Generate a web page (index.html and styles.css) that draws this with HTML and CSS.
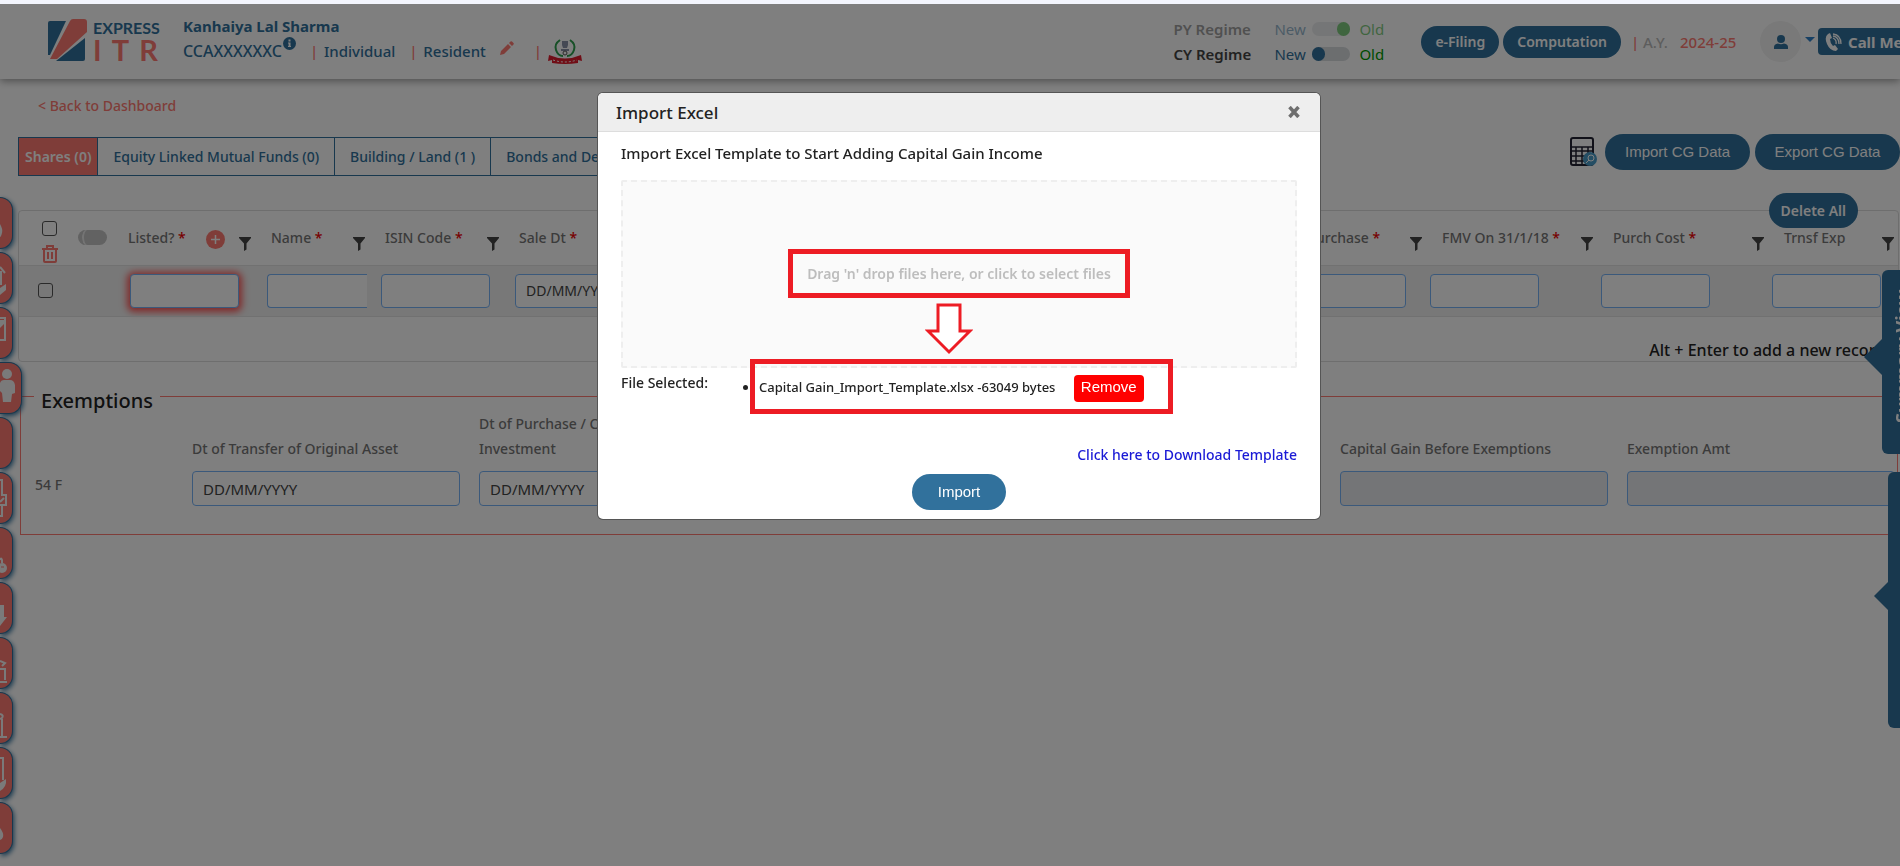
FILE: index.html
```html
<!DOCTYPE html>
<html lang="en">
<head>
    <meta charset="utf-8">
    <title>Express ITR - Capital Gain</title>
    <link rel="stylesheet" href="styles.css">
</head>
<body>
    <svg class="defs" width="0" height="0">
        <symbol id="filter" viewBox="0 0 12 14">
            <path d="M0 0h12v1L7.500 6.500V12.500L5 14V6.500L0 1z" fill="#444"/>
        </symbol>
    </svg>

    <header>
        <div class="logo">
            <svg width="40" height="43" viewBox="0 0 40 43">
                <path d="M2 2h16L2 36H0V4q0-2 2-2z" fill="#31719c"/>
                <path d="M25 0h11q3 0 3 3v10L9 40H2L22 2q1-2 3-2z" fill="#ff7b72"/>
                <path d="M37 19v21q0 2-2 2H8z" fill="#31719c"/>
            </svg>
            <div class="logo-text">
                <span class="express">EXPRESS</span>
                <span class="itr"><b>I</b><b>T</b><b>R</b></span>
            </div>
        </div>
        <div class="client">
            <div class="client-name">Kanhaiya Lal Sharma</div>
            <div class="client-info">
                <span class="pan">CCAXXXXXXC</span>
                <svg class="info" width="13" height="13" viewBox="0 0 13 13"><circle cx="6.500" cy="6.500" r="6.500" fill="#31719c"/><path d="M5.500 2.500h2v2h-2zM5 5.500h2.500V9H8v1H5V9h.6V6.500H5z" fill="#fff"/></svg>
                <i>|</i>
                <span>Individual</span>
                <i>|</i>
                <span>Resident</span>
                <svg class="pencil" width="14" height="14" viewBox="0 0 14 14"><path d="M0 14l1-4 7-7 3 3-7 7zM9 2l1.500-1.500q.7-.7 1.500 0L13.500 2q.7.8 0 1.500L12 5z" fill="#ff7b72"/></svg>
                <i>|</i>
                <svg class="emblem" width="34" height="26" viewBox="0 0 34 26">
                    <path d="M12 2q-6 4-4 10 2 6 7 6M22 2q6 4 4 10-2 6-7 6" fill="none" stroke="#2fa04e" stroke-width="2"/>
                    <path d="M14 3h6v4l-1 3h-4l-1-3zM13 11h8v2h-8z" fill="#8a93a8"/>
                    <circle cx="17" cy="15" r="2" fill="none" stroke="#555"/>
                    <path d="M1 17q16 7 32 0l1 6-4-1v3q-13 2-26 0v-3l-4 1z" fill="#e01b2c"/>
                    <path d="M5 22q12 4 24 0" fill="none" stroke="#fff" stroke-dasharray="2 2"/>
                </svg>
            </div>
        </div>
        <div class="regimes">
            <div class="regime faded">
                <strong>PY Regime</strong>
                <label for="py">New</label>
                <input type="checkbox" id="py" class="switch" checked>
                <label for="py" class="old">Old</label>
            </div>
            <div class="regime">
                <strong>CY Regime</strong>
                <label for="cy">New</label>
                <input type="checkbox" id="cy" class="switch">
                <label for="cy" class="old">Old</label>
            </div>
        </div>
        <div class="actions">
            <button class="pill">e-Filing</button>
            <button class="pill">Computation</button>
            <i>|</i>
            <span class="ay">A.Y.</span>
            <span class="year">2024-25</span>
            <button class="user" aria-label="Account">
                <svg width="14" height="14" viewBox="0 0 14 14"><circle cx="7" cy="4" r="4" fill="#31719c"/><path d="M0 14v-2q0-3 4-3.500 3 1.500 6 0 4 .5 4 3.500v2z" fill="#31719c"/></svg>
            </button>
            <span class="caret"></span>
            <button class="call">
                <svg width="17" height="18" viewBox="0 0 17 18"><path d="M3 1l2-1 2 5-2 1q0 4 3 7l2-1 3 4-2 2Q5 18 2 11-1 4 3 1z" fill="#fff"/><path d="M8 5q4 2 3 6M8 3q6 1 6 8M8 1q8 1 8 10" fill="none" stroke="#fff" stroke-width="1.300"/></svg>
                Call Me
            </button>
        </div>
    </header>

    <main>
        <a href="#" class="back">&lt; Back to Dashboard</a>
        <div class="toolbar">
            <nav class="tabs">
                <a href="#" class="active">Shares (0)</a>
                <a href="#">Equity Linked Mutual Funds (0)</a>
                <a href="#">Building / Land (1 )</a>
                <a href="#">Bonds and Debentures (0)</a>
            </nav>
            <div class="tools">
                <svg width="27" height="29" viewBox="0 0 27 29">
                    <rect x="1" y="1" width="22" height="27" rx="2" fill="none" stroke="#223" stroke-width="2"/>
                    <path d="M1 10h22M1 14h22M1 19h22M1 24h22M6 10v18M12 10v18M18 10v18" stroke="#223" stroke-width="1.500"/>
                    <circle cx="20" cy="22" r="7" fill="#4a9cc9"/>
                    <circle cx="21" cy="21" r="3" fill="none" stroke="#fff"/><path d="M19 23l-3 3" stroke="#fff"/>
                </svg>
                <button class="pill wide">Import CG Data</button>
                <button class="pill wide">Export CG Data</button>
            </div>
        </div>

        <section class="grid-panel">
            <button class="pill delete-all">Delete All</button>
            <table>
                <colgroup>
                    <col class="c-check"><col class="c-listed"><col class="c-name"><col class="c-isin"><col class="c-date">
                    <col><col class="c-date"><col class="c-date"><col class="c-date"><col class="c-last">
                </colgroup>
                <thead>
                    <tr>
                        <th>
                            <div class="select-all">
                                <div class="stack">
                                    <input type="checkbox" class="tick" aria-label="Select all">
                                    <svg width="16" height="18" viewBox="0 0 16 18"><path d="M0 4h16M5 3V1h6v2M2 4v12q0 1 1 1h10q1 0 1-1V4M6 7v7M10 7v7" fill="none" stroke="#ff7b72" stroke-width="2"/></svg>
                                </div>
                                <span class="mini-switch"></span>
                            </div>
                        </th>
                        <th><div class="head"><span>Listed? <em>*</em></span>
                            <svg class="plus" width="19" height="19" viewBox="0 0 19 19"><circle cx="9.500" cy="9.500" r="9.500" fill="#ff7b72"/><path d="M9.500 5v9M5 9.500h9" stroke="#fff" stroke-width="1.500"/></svg>
                            <svg class="filter"><use href="#filter"/></svg></div></th>
                        <th><div class="head"><span>Name <em>*</em></span><svg class="filter"><use href="#filter"/></svg></div></th>
                        <th><div class="head"><span>ISIN Code <em>*</em></span><svg class="filter"><use href="#filter"/></svg></div></th>
                        <th><div class="head"><span>Sale Dt <em>*</em></span><svg class="filter"><use href="#filter"/></svg></div></th>
                        <th></th>
                        <th><div class="head"><span>Dt of Purchase <em>*</em></span><svg class="filter"><use href="#filter"/></svg></div></th>
                        <th><div class="head"><span>FMV On 31/1/18 <em>*</em></span><svg class="filter"><use href="#filter"/></svg></div></th>
                        <th><div class="head"><span>Purch Cost <em>*</em></span><svg class="filter"><use href="#filter"/></svg></div></th>
                        <th><div class="head"><span>Trnsf Exp</span><svg class="filter"><use href="#filter"/></svg></div></th>
                    </tr>
                </thead>
                <tbody>
                    <tr>
                        <td class="check"><input type="checkbox" class="tick" aria-label="Select row"></td>
                        <td class="listed"><input type="text" class="cell invalid" aria-label="Listed?"></td>
                        <td><input type="text" class="cell cut" aria-label="Name"></td>
                        <td><input type="text" class="cell" aria-label="ISIN Code"></td>
                        <td><input type="text" class="cell date" aria-label="Sale Dt" value="DD/MM/YYYY"></td>
                        <td></td>
                        <td><input type="text" class="cell date" aria-label="Dt of Purchase"></td>
                        <td class="num"><input type="text" class="cell" aria-label="FMV On 31/1/18"></td>
                        <td class="num"><input type="text" class="cell" aria-label="Purch Cost"></td>
                        <td class="num"><input type="text" class="cell" aria-label="Trnsf Exp"></td>
                    </tr>
                </tbody>
            </table>
            <p class="hint">Alt + Enter to add a new record</p>
        </section>

        <fieldset>
            <legend>Exemptions</legend>
            <div class="exempt">
                <span class="section-no">54 F</span>
                <div class="field"><label for="e1">Dt of Transfer of Original Asset</label><input type="text" id="e1" value="DD/MM/YYYY"></div>
                <div class="field"><label for="e2">Dt of Purchase / Construction of New Investment</label><input type="text" id="e2" value="DD/MM/YYYY"></div>
                <div class="field"><label for="e3">Cost of New Asset</label><input type="text" id="e3"></div>
                <div class="field"><label for="e4">Amt Deposited in CGAS</label><input type="text" id="e4"></div>
                <div class="field"><label for="e5">Capital Gain Before Exemptions</label><input type="text" id="e5" disabled></div>
                <div class="field"><label for="e6">Exemption Amt</label><input type="text" id="e6" disabled></div>
            </div>
        </fieldset>
    </main>

    <aside class="rail">
        <a href="#" aria-label="Income"><svg viewBox="0 0 12 50"><path d="M0 26q3 5 2 9-1 4-2 4z"/></svg></a>
        <a href="#" aria-label="House"><svg viewBox="0 0 12 50"><path d="M0 14l5 6M1 18v14" class="line"/><path d="M0 35l6-4v6l-6 5z"/></svg></a>
        <a href="#" aria-label="Business"><svg viewBox="0 0 12 50"><path d="M0 10h5v22H0" class="line"/><path d="M0 20l4-4v-4H0z"/></svg></a>
        <a href="#" class="current" aria-label="Capital gain"><svg viewBox="0 0 20 50"><circle cx="7" cy="11" r="5"/><path d="M0 20q1-3 4-3h6q4 0 5 5v8l-3 1-1 8H3l-1-9-2-2z"/></svg></a>
        <a href="#" aria-label="Other"></a>
        <a href="#" aria-label="Deductions"><svg viewBox="0 0 12 50"><path d="M0 7h2v14M0 32h6V22H1M2 32v11H0M0 29l4-4" class="line"/></svg></a>
        <a href="#" aria-label="Losses"><svg viewBox="0 0 12 50"><path d="M0 32q1-3 2 0v3" class="line"/><circle cx="2" cy="40" r="5"/><path d="M1 39h3" stroke="#ff7b72"/></svg></a>
        <a href="#" aria-label="Taxes"><svg viewBox="0 0 12 50"><path d="M0 22h4v12h3l-7 9z"/></svg></a>
        <a href="#" aria-label="Bank"><svg viewBox="0 0 12 50"><path d="M0 23l5 2-3 3M0 31h5v11M0 44h7" class="line"/></svg></a>
        <a href="#" aria-label="Assets"><svg viewBox="0 0 12 50"><path d="M0 21q4 1 2 4l-2 1M2 26v17M0 44h7" class="line"/></svg></a>
        <a href="#" aria-label="Return"><svg viewBox="0 0 12 50"><path d="M0 10h3v22" class="line"/><path d="M0 35l6-4q1 8-6 12z"/></svg></a>
        <a href="#" aria-label="More"><svg viewBox="0 0 12 50"><path d="M0 25q4 5 3 9-1 3-3 3z"/></svg></a>
    </aside>

    <div class="side-tab summary"><span>Summary View</span></div>
    <div class="side-tab second"></div>

    <div class="backdrop"></div>
    <div class="modal" role="dialog" aria-labelledby="modalTitle">
        <div class="modal-header">
            <h2 id="modalTitle">Import Excel</h2>
            <button class="close" aria-label="Close"><svg width="12" height="12" viewBox="0 0 12 12"><path d="M1.500 1l9 10M10.500 1l-9 10" stroke="#6e6e6e" stroke-width="3.500"/></svg></button>
        </div>
        <div class="modal-body">
            <h3>Import Excel Template to Start Adding Capital Gain Income</h3>
            <div class="dropzone">
                <p>Drag 'n' drop files here, or click to select files</p>
                <svg class="arrow" width="48" height="52" viewBox="0 0 48 52"><path d="M13 2h22v26h10L24 49 3 28h10z" fill="#fff" stroke="#ed1c24" stroke-width="3"/></svg>
            </div>
            <div class="selected">
                <span class="selected-label">File Selected:</span>
                <ul>
                    <li>Capital Gain_Import_Template.xlsx -63049 bytes <button class="remove">Remove</button></li>
                </ul>
                <div class="mark"></div>
            </div>
            <a href="#" class="download">Click here to Download Template</a>
            <button class="pill import">Import</button>
        </div>
    </div>
</body>
</html>
```
FILE: styles.css
```css
* {
    box-sizing: border-box;
}
body {
    margin: 0;
    min-height: 100vh;
    overflow: hidden;
    border-top: 4px solid #f3f5fd;
    background-color: #fff;
    color: #222;
    font-family: "Noto Sans", "Open Sans", sans-serif;
    font-size: 14px;
    font-weight: 500;
}
a {
    text-decoration: none;
}
svg {
    display: block;
    flex: none;
}
button {
    cursor: pointer;
    border: none;
    font-family: inherit;
}
input {
    font-family: inherit;
}
.defs {
    position: absolute;
}

/* header */
header {
    display: flex;
    align-items: center;
    height: 75px;
    padding-left: 48px;
    box-shadow: 0 2px 8px rgba(0, 0, 0, 0.4);
    font-size: 15px;
    white-space: nowrap;
}
header i {
    color: #ff7b72;
    font-style: normal;
}
.logo {
    display: flex;
    gap: 5px;
    width: 135px;
    padding-bottom: 2px;
}
.logo-text {
    width: 65px;
}
.express {
    display: block;
    color: #31719c;
    font-family: Lato, sans-serif;
    font-size: 16px;
    font-weight: 700;
    line-height: 18px;
}
.itr {
    display: flex;
    justify-content: space-between;
    color: #ff7b72;
    font-family: Lato, sans-serif;
    font-size: 29px;
    line-height: 25px;
}
.client {
    padding-bottom: 6px;
    color: #31719c;
}
.client-name {
    font-weight: 700;
    line-height: 24px;
}
.client-info {
    display: flex;
    align-items: center;
    height: 26px;
}
.pan {
    font-size: 16px;
}
.info {
    margin: 0 14px 14px 1px;
}
.client-info i {
    width: 14px;
}
.client-info i + span {
    margin-right: 14px;
}
.pencil {
    margin: 0 20px 6px 0;
}
.regimes {
    margin-left: auto;
    width: 248px;
}
.regime {
    display: flex;
    align-items: center;
    height: 25px;
    color: #444;
}
.faded {
    opacity: 0.5;
}
.regime strong {
    width: 101px;
    font-weight: 600;
}
.regime label {
    width: 38px;
    color: #31719c;
    font-weight: 400;
}
.regime .old {
    margin-left: 9px;
    color: #090;
}
.switch {
    appearance: none;
    display: flex;
    width: 38px;
    height: 14px;
    margin: 0;
    border-radius: 7px;
    background-color: #d8dcdf;
}
.switch::before {
    content: "";
    width: 13px;
    height: 14px;
    border-radius: 7px;
    background-color: #31719c;
}
.switch:checked::before {
    margin-left: auto;
    background-color: #090;
}
.actions {
    display: flex;
    align-items: center;
    margin-right: -20px;
    height: 50px;
}
.pill {
    height: 32px;
    padding: 0 14px;
    border-radius: 18px;
    background-color: #31719c;
    color: #fff;
    font-size: 14px;
    font-weight: 600;
}
.actions .pill {
    margin-right: 4px;
}
.actions i {
    width: 12px;
    margin-left: 6px;
}
.ay {
    width: 37px;
    color: #bbb;
}
.year {
    width: 80px;
    color: #ff7b72;
}
.user {
    display: flex;
    align-items: center;
    justify-content: center;
    width: 41px;
    height: 41px;
    border-radius: 50%;
    background-color: #f2f2f2;
}
.caret {
    margin: 0 3px 4px 4px;
    border: 5px solid transparent;
    border-top-color: #2f80c8;
    border-bottom: none;
}
.call {
    display: flex;
    align-items: center;
    gap: 6px;
    width: 102px;
    height: 27px;
    padding: 0 7px;
    border-radius: 4px;
    background-color: #31719c;
    color: #fff;
    font-size: 15px;
    font-weight: 700;
    white-space: nowrap;
}

/* tabs */
.back {
    display: block;
    margin: 16px 38px 20px;
    color: #ff7b72;
    line-height: 22px;
}
.toolbar {
    display: flex;
    justify-content: space-between;
    height: 56px;
    padding-left: 18px;
    white-space: nowrap;
}
.tabs {
    display: flex;
    height: 39px;
    border: 1px solid #31719c;
}
.tabs a {
    padding: 0 15px;
    border-right: 1px solid #31719c;
    color: #31719c;
    line-height: 37px;
}
.tabs .active {
    padding: 0 6px;
    background-color: #ff7b72;
    color: #fff;
    font-weight: 600;
}
.tools {
    display: flex;
    gap: 5px;
    margin-top: -3px;
}
.tools svg {
    margin: 3px 3px 0 0;
}
.wide, .import {
    height: 36px;
    padding-bottom: 2px;
    font-family: "Liberation Sans", sans-serif;
    font-size: 15px;
    font-weight: 400;
}
.wide {
    width: 145px;
}

/* grid */
.grid-panel {
    position: relative;
    margin: 17px 1px 0 18px;
    height: 152px;
    border: 1px solid #ddd;
    border-radius: 4px;
}
.delete-all {
    position: absolute;
    top: -18px;
    right: 40px;
    height: 35px;
    padding: 0 12px;
}
table {
    width: 100%;
    table-layout: fixed;
    border-collapse: collapse;
}
.c-check {
    width: 97px;
}
.c-listed {
    width: 143px;
}
.c-name {
    width: 114px;
}
.c-isin {
    width: 134px;
}
.c-date {
    width: 171px;
}
.c-last {
    width: 126px;
}
th {
    height: 54px;
    padding: 0 8px 0 12px;
    color: #777;
    font-weight: 500;
    text-align: left;
}
th:last-child {
    padding-right: 4px;
}
th:first-child {
    padding-left: 23px;
}
th em {
    color: #e00;
    font-style: normal;
}
.head {
    display: flex;
    align-items: center;
    white-space: nowrap;
}
.head span {
    flex: 1;
}
.filter {
    width: 12px;
    height: 14px;
    margin-top: 12px;
}
.plus {
    margin: 4px 14px 0 0;
}
.stack {
    display: grid;
    gap: 9px;
}
.select-all {
    display: flex;
    gap: 20px;
    padding-top: 8px;
}
.tick {
    appearance: none;
    width: 15px;
    height: 15px;
    margin: 0;
    border: 1px solid #555;
    border-radius: 3px;
}
.mini-switch {
    width: 29px;
    height: 15px;
    margin-top: 9px;
    border-radius: 8px;
    border-left: 4px solid #c4c4c4;
    background-color: #c4c4c4;
    box-shadow: inset 2px 0 #e8e8e8;
}
tbody tr {
    height: 51px;
    border: 1px solid #e2e2e2;
    border-width: 1px 0;
    background-color: #f0f0f0;
}
td {
    padding: 0 0 0 8px;
}
td.check {
    padding-left: 19px;
}
td.listed {
    padding-left: 14px;
}
td.num {
    padding-left: 0;
}
.check .tick {
    display: block;
}
.cell {
    display: block;
    width: 109px;
    height: 34px;
    border: 1px solid #77b3f7;
    border-radius: 4px;
    background-color: #fff;
}
.invalid {
    box-shadow: 0 1px 7px 3px #f55;
}
.cut {
    width: 100px;
    border-right: none;
    border-radius: 4px 0 0 4px;
}
.date {
    width: 139px;
    padding: 0 10px;
    color: #444;
    font-size: 14px;
}
.hint {
    margin: 0;
    padding: 21px 13px 0 0;
    text-align: right;
    color: #222;
    font-size: 16px;
    line-height: 24px;
}

/* exemptions */
fieldset {
    height: 154px;
    margin: 19px 2px 0 20px;
    padding: 0;
    border: 1px solid #ff7b72;
}
legend {
    margin-left: 13px;
    padding: 9px 7px 0;
    font-size: 20px;
    font-weight: 500;
    line-height: 21px;
}
.exempt {
    display: grid;
    grid-template-columns: 138px repeat(6, 1fr);
    gap: 19px;
    padding: 0 2px 0 14px;
    align-items: end;
    color: #777;
}
.section-no {
    padding-bottom: 12px;
}
.field {
    display: flex;
    flex-direction: column;
    justify-content: end;
}
.field label {
    line-height: 25px;
    margin-bottom: 10px;
}
.field input {
    height: 35px;
    padding: 0 10px;
    border: 1px solid #77b3f7;
    border-radius: 4px;
    background-color: #fff;
    color: #444;
    font-size: 15px;
}
.field input:disabled {
    background-color: #e9ebee;
}

/* left rail and right tabs */
.rail {
    position: fixed;
    top: 197px;
    left: 0;
    display: grid;
    gap: 3px;
}
.rail a {
    width: 13px;
    height: 52px;
    border: 1px solid #31719c;
    border-left: none;
    border-radius: 0 13px 13px 0;
    background-color: #ff7b72;
    box-shadow: 1px 2px 5px #31719c;
}
.rail .current {
    width: 22px;
}
.rail svg {
    height: 50px;
    fill: #f4f4f4;
}
.rail .line {
    fill: none;
    stroke: #f4f4f4;
    stroke-width: 2;
}
.side-tab {
    position: fixed;
    right: 0;
    border-radius: 6px 0 0 6px;
    background-color: #31719c;
    color: #fff;
}
.side-tab::before {
    content: "";
    position: absolute;
    right: 100%;
    border: 18px solid transparent;
    border-right-color: #31719c;
    border-left: none;
}
.summary {
    top: 270px;
    width: 18px;
    height: 184px;
}
.summary::before {
    top: 69px;
}
.summary span {
    display: block;
    width: 24px;
    height: 184px;
    margin-left: 8px;
    padding-top: 31px;
    font-size: 18px;
    font-weight: 700;
    line-height: 24px;
    writing-mode: vertical-rl;
    rotate: 180deg;
}
.second {
    top: 472px;
    width: 12px;
    height: 256px;
}
.second::before {
    top: 110px;
    border-width: 14px;
    border-left: none;
}

/* modal */
.backdrop {
    position: fixed;
    inset: 4px 0 0;
    background-color: rgba(0, 0, 0, 0.5);
}
.modal {
    position: fixed;
    top: 93px;
    left: 0;
    right: 0;
    width: 722px;
    margin: 0 auto;
    translate: 9px;
    border-radius: 5px;
    background-color: #fff;
    box-shadow: 0 0 0 1px #555;
}
.modal-header {
    display: flex;
    align-items: center;
    justify-content: space-between;
    height: 39px;
    padding: 0 20px 0 18px;
    border-bottom: 1px solid #ddd;
    border-radius: 5px 5px 0 0;
    background-color: #eee;
}
h2, h3 {
    margin: 0;
    font-size: 17px;
    font-weight: 500;
}
h3 {
    font-size: 15px;
    line-height: 22px;
}
.close {
    padding: 0;
    background: none;
}
.modal-body {
    display: flex;
    flex-direction: column;
    padding: 10px 23px 9px 23px;
}
.dropzone {
    position: relative;
    height: 188px;
    margin-top: 16px;
    padding-top: 67px;
    border: 2px dashed #eee;
    border-radius: 2px;
    background-color: #fafafa;
}
.dropzone p {
    width: 342px;
    margin: 0 auto;
    border: 5px solid #ed1c24;
    color: #bdbdbd;
    font-size: 14px;
    font-weight: 600;
    line-height: 39px;
    text-align: center;
}
.arrow {
    position: absolute;
    top: 121px;
    left: 302px;
}
.selected {
    position: relative;
    display: flex;
    height: 76px;
    padding-top: 4px;
}
.selected-label {
    width: 98px;
    line-height: 22px;
}
.selected ul {
    margin: 2px 0 0;
    font-size: 13px;
    line-height: 27px;
}
.remove {
    height: 27px;
    margin-left: 15px;
    padding: 0 7px 3px;
    border-radius: 4px;
    background-color: #f00;
    color: #fff;
    font-family: "Liberation Sans", sans-serif;
    font-size: 15px;
}
.mark {
    position: absolute;
    top: -9px;
    left: 129px;
    width: 423px;
    height: 55px;
    border: 5px solid #ed1c24;
}
.download {
    align-self: end;
    color: #1a1ad6;
    line-height: 22px;
}
.import {
    align-self: center;
    width: 94px;
    margin-top: 8px;
}
```
